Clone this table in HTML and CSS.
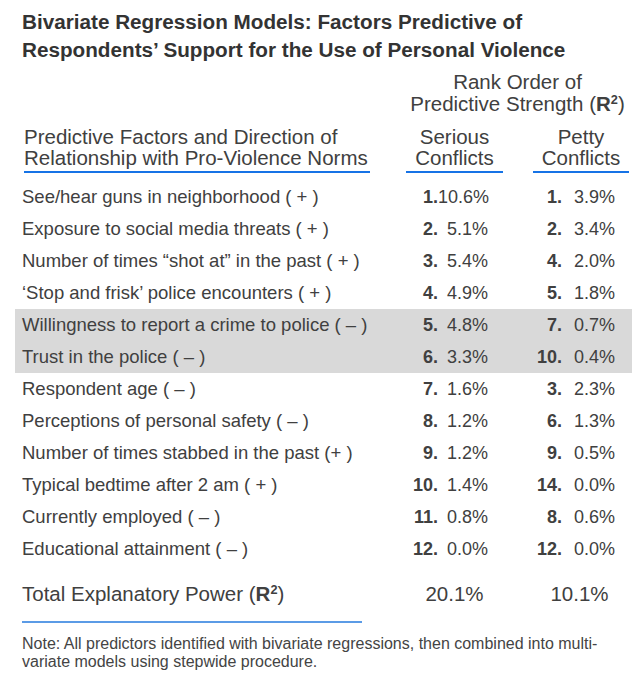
FILE: index.html
```html
<!DOCTYPE html>
<html lang="en">
<head>
<meta charset="utf-8">
<title>Bivariate Regression Models</title>
<link rel="stylesheet" href="styles.css">
</head>
<body>
<div class="page">
  <h1 class="title">Bivariate Regression Models: Factors Predictive of<br>Respondents’ Support for the Use of Personal Violence</h1>

  <div class="rank-head">
    <div class="rank-title">Rank Order of<br>Predictive Strength (<b>R<sup>2</sup></b>)</div>
  </div>

  <div class="col-heads">
    <div class="head head-factor">Predictive Factors and Direction of<br>Relationship with Pro-Violence Norms</div>
    <div class="head head-serious">Serious<br>Conflicts</div>
    <div class="head head-petty">Petty<br>Conflicts</div>
  </div>

  <div class="rows">
    <div class="row"><span class="label">See/hear guns in neighborhood ( + )</span><b class="rank">1.</b><span class="val">10.6%</span><span></span><b class="rank">1.</b><span class="val">3.9%</span></div>
    <div class="row"><span class="label">Exposure to social media threats ( + )</span><b class="rank">2.</b><span class="val">5.1%</span><span></span><b class="rank">2.</b><span class="val">3.4%</span></div>
    <div class="row"><span class="label">Number of times “shot at” in the past ( + )</span><b class="rank">3.</b><span class="val">5.4%</span><span></span><b class="rank">4.</b><span class="val">2.0%</span></div>
    <div class="row"><span class="label">‘Stop and frisk’ police encounters ( + )</span><b class="rank">4.</b><span class="val">4.9%</span><span></span><b class="rank">5.</b><span class="val">1.8%</span></div>
    <div class="row row-shaded"><span class="label">Willingness to report a crime to police ( – )</span><b class="rank">5.</b><span class="val">4.8%</span><span></span><b class="rank">7.</b><span class="val">0.7%</span></div>
    <div class="row row-shaded"><span class="label">Trust in the police ( – )</span><b class="rank">6.</b><span class="val">3.3%</span><span></span><b class="rank">10.</b><span class="val">0.4%</span></div>
    <div class="row"><span class="label">Respondent age ( – )</span><b class="rank">7.</b><span class="val">1.6%</span><span></span><b class="rank">3.</b><span class="val">2.3%</span></div>
    <div class="row"><span class="label">Perceptions of personal safety ( – )</span><b class="rank">8.</b><span class="val">1.2%</span><span></span><b class="rank">6.</b><span class="val">1.3%</span></div>
    <div class="row"><span class="label">Number of times stabbed in the past (+ )</span><b class="rank">9.</b><span class="val">1.2%</span><span></span><b class="rank">9.</b><span class="val">0.5%</span></div>
    <div class="row"><span class="label">Typical bedtime after 2 am ( + )</span><b class="rank">10.</b><span class="val">1.4%</span><span></span><b class="rank">14.</b><span class="val">0.0%</span></div>
    <div class="row"><span class="label">Currently employed ( – )</span><b class="rank">11.</b><span class="val">0.8%</span><span></span><b class="rank">8.</b><span class="val">0.6%</span></div>
    <div class="row"><span class="label">Educational attainment ( – )</span><b class="rank">12.</b><span class="val">0.0%</span><span></span><b class="rank">12.</b><span class="val">0.0%</span></div>
  </div>

  <div class="total">
    <span class="total-label">Total Explanatory Power (<b>R<sup>2</sup></b>)</span>
    <span class="total-val total-serious">20.1%</span>
    <span class="total-val total-petty">10.1%</span>
  </div>
  <div class="total-rule"></div>

  <p class="note">Note: All predictors identified with bivariate regressions, then combined into multi-<br>variate models using stepwide procedure.</p>
</div>
</body>
</html>
```

FILE: styles.css
```css
html, body {
  margin: 0;
  padding: 0;
  background: #ffffff;
}

.page {
  width: 640px;
  height: 678px;
  font-family: "Liberation Sans", Arial, Helvetica, sans-serif;
  color: #404040;
  overflow: hidden;
}

.title {
  margin: 0;
  padding: 8px 0 0 22px;
  font-size: 20.7px;
  line-height: 28px;
  font-weight: bold;
  color: #333333;
}

sup {
  font-size: 0.62em;
  line-height: 0;
  vertical-align: 0.55em;
}

.rank-head {
  display: flex;
  justify-content: flex-end;
  padding: 7px 11px 0 0;
}

.rank-title {
  width: 223px;
  text-align: center;
  font-size: 20.5px;
  line-height: 22px;
}

.col-heads {
  display: flex;
  align-items: flex-end;
  margin-top: 11px;
}

.head {
  font-size: 20.5px;
  line-height: 21px;
  padding-bottom: 3px;
  border-bottom: 2px solid #1673e6;
}

.head-factor {
  margin-left: 24px;
  width: 346px;
  white-space: nowrap;
}

.head-serious {
  margin-left: 36px;
  width: 97px;
  text-align: center;
}

.head-petty {
  margin-left: 30px;
  width: 96px;
  text-align: center;
}

.rows {
  margin-top: 8px;
}

.row {
  display: grid;
  grid-template-columns: 1fr 40px 50px 34px 40px 53px;
  margin: 0 8px 0 15px;
  padding: 0 17px 0 7px;
  height: 32px;
  align-items: center;
  font-size: 18px;
  line-height: 32px;
  white-space: nowrap;
}

.label {
  font-size: 18.5px;
}

.row-shaded {
  background: #d9d9d9;
}

.rank {
  text-align: right;
  font-weight: bold;
  color: #404040;
}

.val {
  text-align: right;
}

.total {
  display: flex;
  align-items: center;
  margin-top: 13px;
  height: 32px;
  font-size: 20.5px;
  line-height: 32px;
}

.total-label {
  margin-left: 22px;
  width: 384px;
}

.total-val {
  width: 97px;
  text-align: center;
}

.total-petty {
  margin-left: 28px;
}

.total-rule {
  margin: 11px 0 0 22px;
  width: 340px;
  height: 2px;
  background: #5b9be6;
}

.note {
  margin: 12px 0 0 22px;
  font-size: 16px;
  line-height: 18px;
  color: #444444;
}
```
